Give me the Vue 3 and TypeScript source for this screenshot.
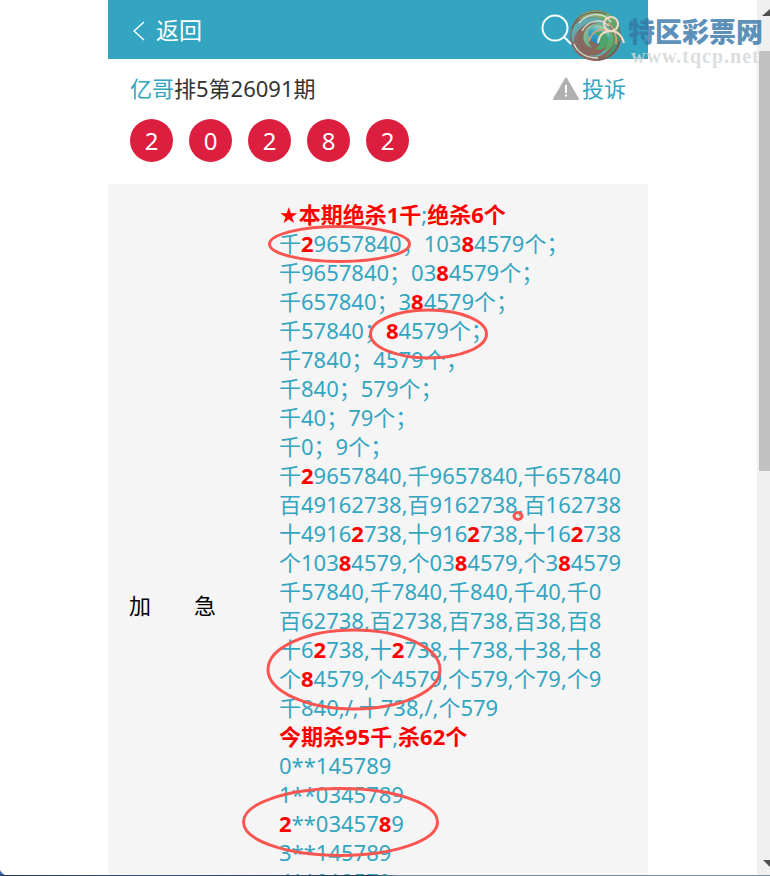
<script setup lang="ts">
interface Part {
  text: string
  kind: 'plain' | 'hit' | 'star'
}

const balls: number[] = [2, 0, 2, 8, 2]

// Text between square brackets is emphasised.
const source: string[] = [
  '★[本期绝杀1千];[绝杀6个]',
  '千[2]9657840；103[8]4579个；',
  '千9657840；03[8]4579个；',
  '千657840；3[8]4579个；',
  '千57840；[8]4579个；',
  '千7840；4579个；',
  '千840；579个；',
  '千40；79个；',
  '千0；9个；',
  '千[2]9657840,千9657840,千657840',
  '百49162738,百9162738,百162738',
  '十4916[2]738,十916[2]738,十16[2]738',
  '个103[8]4579,个03[8]4579,个3[8]4579',
  '千57840,千7840,千840,千40,千0',
  '百62738,百2738,百738,百38,百8',
  '十6[2]738,十[2]738,十738,十38,十8',
  '个[8]4579,个4579,个579,个79,个9',
  '千840,/,十738,/,个579',
  '[今期杀95千],[杀62个]',
  '0**145789',
  '1**0345789',
  '[2]**03457[8]9',
  '3**145789',
  '4**012579',
]

function kindOf(piece: string): Part['kind'] {
  if (piece === '★') return 'star'
  return piece.startsWith('[') ? 'hit' : 'plain'
}

const lines: Part[][] = source.map((line) =>
  line
    .split(/(★|\[[^\]]*\])/)
    .filter((piece) => piece !== '')
    .map((piece) => ({ text: piece.replace(/[[\]]/g, ''), kind: kindOf(piece) })),
)
</script>

<template>
  <div class="window">
    <main class="page">
      <header class="bar">
        <a class="back" href="#">
          <svg class="chevron" viewBox="0 0 12 20" aria-hidden="true"><path d="M11 1 1 10l10 9" /></svg>
          <span>返回</span>
        </a>
        <nav class="tools">
          <button type="button" aria-label="搜索">
            <svg viewBox="0 0 32 34"><circle cx="15" cy="14" r="12.500" /><path d="m24 23 7 7" /></svg>
          </button>
          <button type="button" aria-label="用户">
            <svg viewBox="0 0 32 34"><circle cx="17" cy="10" r="7" /><path d="M4 29c1-8 6-12 13-12s11 5 13 12" /></svg>
          </button>
        </nav>
      </header>

      <section class="issue">
        <div class="heading">
          <h1><a href="#">亿哥</a>排5第26091期</h1>
          <a class="report" href="#">
            <svg viewBox="0 0 28 24" aria-hidden="true">
              <path class="tri" d="M14 1.500 26 22H2Z" />
              <path class="mark" d="M14 8v8M14 17.500v2" />
            </svg>
            <span>投诉</span>
          </a>
        </div>
        <ul class="balls">
          <li v-for="(n, i) in balls" :key="i">{{ n }}</li>
        </ul>
      </section>

      <section class="panel">
        <h2><span>加</span><span>急</span></h2>
        <div class="lines">
          <p v-for="(line, i) in lines" :key="i"><template v-for="(part, j) in line" :key="j"><span v-if="part.kind === 'plain'">{{ part.text }}</span><b v-else :class="part.kind">{{ part.text }}</b></template></p>
        </div>
        <svg class="marks" viewBox="0 0 540 692" aria-hidden="true">
          <ellipse cx="231.500" cy="60" rx="70" ry="17.500" />
          <ellipse cx="320.500" cy="150" rx="58" ry="24" />
          <ellipse cx="246" cy="485.500" rx="86" ry="39.500" />
          <ellipse cx="232.500" cy="638" rx="97" ry="33.500" />
          <ellipse cx="410" cy="332" rx="4" ry="3.500" />
        </svg>
      </section>
    </main>

    <div class="scroll" aria-hidden="true">
      <svg viewBox="0 0 13 50"><path d="m13 9-8 7h8Z" /></svg>
      <i></i>
      <svg viewBox="0 0 13 20"><path d="M6 4h7v7Z" /></svg>
    </div>

    <div class="watermark">
      <svg class="swirl" viewBox="0 0 64 62" aria-hidden="true">
        <defs>
          <linearGradient id="rim" x1="0" y1="0" x2="1" y2="1">
            <stop offset="0" stop-color="#7f7a70" />
            <stop offset=".5" stop-color="#856a62" />
            <stop offset="1" stop-color="#94604c" />
          </linearGradient>
          <linearGradient id="leaf" x1="0" y1="0" x2="1" y2="1">
            <stop offset="0" stop-color="#a9a878" />
            <stop offset=".45" stop-color="#6fae6b" />
            <stop offset="1" stop-color="#2c8d72" />
          </linearGradient>
          <linearGradient id="inner" x1="0" y1="0" x2="1" y2="1">
            <stop offset="0" stop-color="#8fb9a4" />
            <stop offset="1" stop-color="#4fa85e" />
          </linearGradient>
          <linearGradient id="core" x1="0" y1="0" x2="0" y2="1">
            <stop offset="0" stop-color="#a5d3b0" />
            <stop offset=".5" stop-color="#3aa5c4" />
            <stop offset="1" stop-color="#2386ba" />
          </linearGradient>
        </defs>
        <path fill="url(#rim)" d="M6 32C6 16 18 6 33 6c14 1 24 12 24 27 0 14-10 23-24 24C18 57 6 47 6 32Z" />
        <path fill="url(#leaf)" d="M12 17C21 2 47 3 54 21c5 15-1 28-14 33 10-8 14-23 6-33C38 11 21 11 12 17Z" />
        <path fill="#62a9ae" d="M9 24c8-14 29-14 36-2 7 11 3 24-7 29-4 2-9 2-13 0 11-2 18-11 15-20-4-12-20-13-27-3-3 4-4 8-3 12-3-5-3-11-1-16Z" />
        <path fill="#8b6559" d="M14 34c0-13 14-20 25-12 8 7 8 20-2 27-4 3-10 3-14 1 10-1 15-9 12-17-4-8-14-7-17 0-1 4 0 8 3 12-4-2-7-6-7-11Z" />
        <path fill="url(#inner)" d="M20 29c4-11 18-13 26-4 7 8 4 20-6 23 4-6 4-13-1-17-5-5-12-3-14 2-1 4 0 8 3 11-7-2-10-8-8-15Z" />
        <ellipse cx="35" cy="31" rx="11" ry="9" transform="rotate(25 35 31)" fill="url(#core)" />
        <path fill="#4fa46a" d="M31 29c8-5 16 3 12 11-2 5-8 7-12 5 6-3 7-9 0-16Z" />
        <path fill="none" stroke="#d2ddcb" stroke-width="1.500" d="M15 19C24 8 40 8 47 18M10 40c4 9 13 14 24 14M18 27c6-11 19-13 27-5" />
        <path fill="none" stroke="#dea276" stroke-width="1.500" d="M25 37c2-8 8-12 16-11M44 19c7 6 9 13 8 21" />
        <path fill="none" stroke="#5d5a54" stroke-width="1" d="M8 25C12 11 28 5 42 10M55 38c-2 9-10 17-20 18" />
      </svg>
      <div class="brand">
        <strong>特区彩票网</strong>
        <span>www.tqcp.net</span>
      </div>
    </div>
    <svg class="corner" viewBox="0 0 9 6" aria-hidden="true"><path d="M0 0q2 5 9 6H0Z" /></svg>
    <div class="edge"></div>
  </div>
</template>

<style>
body {
  margin: 0;
  background: #fff;
}
</style>

<style scoped>
.window {
  position: relative;
  box-sizing: border-box;
  height: 100vh;
  padding-right: 14px;
  overflow: hidden;
  background: #fff;
  color: #333;
  font: 22px/29px "Noto Sans", "Noto Sans CJK SC", sans-serif;
}
a {
  color: #33a5c0;
  text-decoration: none;
}
h1,
h2,
p,
ul {
  margin: 0;
  padding: 0;
  font-size: 22px;
  font-weight: 400;
}
.page {
  max-width: 540px;
  margin: 0 auto;
}
.bar {
  display: flex;
  justify-content: space-between;
  align-items: center;
  box-sizing: border-box;
  height: 59px;
  padding: 2px 22px 0 25px;
  background: #33a5c0;
}
.back {
  display: flex;
  align-items: center;
  gap: 11px;
  color: #fff;
  font-size: 23px;
}
.chevron {
  width: 12px;
  height: 20px;
  fill: none;
  stroke: #fff;
  stroke-width: 1.5;
}
.tools {
  position: relative;
  z-index: 1;
  display: flex;
  gap: 22px;
}
.tools button {
  display: flex;
  padding: 0;
  border: 0;
  background: none;
}
.tools svg {
  width: 32px;
  height: 34px;
  fill: none;
  stroke: #fff;
  stroke-width: 2;
}
.tools button + button svg {
  stroke: #f3d9c6;
}
.issue {
  padding: 15px 22px 22px;
}
.heading {
  display: flex;
  justify-content: space-between;
}
.report {
  display: flex;
  align-items: center;
  gap: 2px;
}
.report svg {
  width: 28px;
  height: 24px;
}
.tri {
  fill: #b0b0b0;
  stroke: #b0b0b0;
  stroke-width: 2;
  stroke-linejoin: round;
}
.mark {
  stroke: #fff;
  stroke-width: 2;
}
.balls {
  display: flex;
  gap: 16px;
  margin-top: 16px;
  list-style: none;
}
.balls li {
  width: 43px;
  height: 43px;
  border-radius: 50%;
  background: #dc1f3e;
  color: #fff;
  font-size: 24px;
  line-height: 43px;
  text-align: center;
}
.panel {
  position: relative;
  display: grid;
  grid-template-columns: 150px 1fr;
  align-items: center;
  padding: 16px 0 132px 21px;
  background: #f5f5f5;
}
.panel h2 {
  display: flex;
  gap: 43px;
  padding-top: 114px;
  color: #000;
}
.lines {
  color: #33a5c0;
  white-space: nowrap;
}
.lines b {
  color: #f00;
  font-weight: 700;
}
.lines .star {
  font-family: "DejaVu Sans", sans-serif;
  font-weight: 400;
}
.lines p {
  height: 29px;
}
.marks {
  position: absolute;
  top: 0;
  left: 0;
  width: 100%;
  fill: none;
  stroke: #fb5551;
  stroke-width: 3;
}
.watermark {
  position: absolute;
  top: 4px;
  right: 8px;
  display: flex;
}
.swirl {
  width: 64px;
  height: 62px;
}
.brand {
  display: flex;
  flex-direction: column;
  width: 134px;
  padding-top: 12px;
  white-space: nowrap;
}
.brand strong {
  color: #3576a8;
  font-family: "Noto Sans CJK SC", sans-serif;
  font-size: 27px;
  font-weight: 900;
  line-height: 30px;
  opacity: .8;
}
.brand span {
  padding-left: 3px;
  color: #d3d7da;
  font: 700 20px/20px "Liberation Serif", serif;
  letter-spacing: 1px;
  opacity: .8;
}
.scroll {
  position: absolute;
  top: 0;
  right: 0;
  bottom: 0;
  display: flex;
  flex-direction: column;
  width: 13px;
  background: #f0f0f0;
}
.scroll svg {
  width: 13px;
  fill: #505050;
}
.scroll i {
  height: 48%;
  margin: 1px 0 auto 2px;
  background: #c1c1c1;
}
.corner {
  position: absolute;
  bottom: 0;
  left: 0;
  width: 9px;
  height: 6px;
  fill: #3b68a8;
}
.edge {
  position: absolute;
  right: 0;
  bottom: 0;
  left: 0;
  height: 1px;
  background: linear-gradient(90deg, #29344c, #3b5584 20%, #29344c 48%, #7e8c9c 52%, #7e8c9c);
}
</style>
